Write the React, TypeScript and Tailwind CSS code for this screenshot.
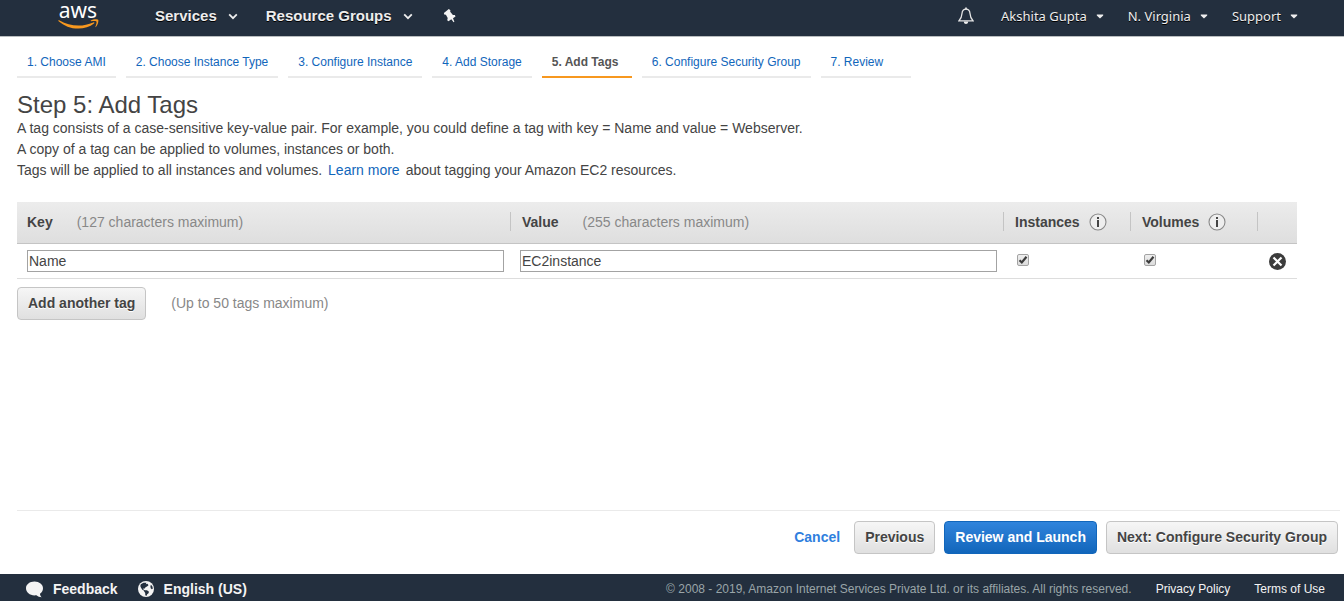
import { useState } from 'react';
import type { ReactNode } from 'react';

const steps = [
  '1. Choose AMI',
  '2. Choose Instance Type',
  '3. Configure Instance',
  '4. Add Storage',
  '5. Add Tags',
  '6. Configure Security Group',
  '7. Review',
];

function Caret({ small = false }: { small?: boolean }) {
  return small ? (
    <svg viewBox="0 0 8 5" className="h-[5px] w-2" aria-hidden="true">
      <path d="M0.8 0.5h6.400v1L4 4.400 0.800 1.500z" fill="#eee" />
    </svg>
  ) : (
    <svg viewBox="0 0 10 7" className="h-[7px] w-[10px]" aria-hidden="true">
      <path d="M1.200 1.400 5 5.200 8.800 1.400" fill="none" stroke="#eee" strokeWidth="1.800" />
    </svg>
  );
}

function AwsLogo() {
  return (
    <a href="#home" aria-label="AWS home" className="flex w-[42px] flex-col items-center pb-[6px]">
      <svg viewBox="0 0 42 28" className="h-7 w-[42px]" aria-hidden="true">
        <text x="21" y="17" textAnchor="middle" fontFamily="'Noto Sans', 'Open Sans', sans-serif" fontSize="21" fontWeight="400" fill="#fff">
          aws
        </text>
        <g transform="translate(0 18)">
          <path d="M1.300 1.600C1.500 1.100 2 1.100 2.600 1.400 8.500 4.800 14.500 6.500 21.500 6.500 26.500 6.500 31.500 5.500 36.300 3.400 37.200 3 37.900 3.900 37 4.500 33 7.700 27 9.600 21.500 9.600 13.500 9.600 7 6.700 1.600 2.200 1.300 2 1.200 1.800 1.300 1.600z" fill="#f7981f" />
          <path d="M33.800 1.600C36 0 40.500 0 41.200 0.800 41.800 1.600 41 6 38.900 8 38.500 8.300 38.200 8.100 38.400 7.700 39.100 6 40 3.200 39.400 2.500 38.800 1.800 35.700 2 34.200 2.200 33.600 2.200 33.500 1.900 33.800 1.600z" fill="#f7981f" />
        </g>
      </svg>
    </a>
  );
}

function PinIcon() {
  return (
    <svg viewBox="0 0 14 16" className="h-4 w-[14px]" aria-hidden="true">
      <path d="M5.800 1 7.400 2.200 7.200 3.800 9.900 7 11.900 7 12.500 8.500 10 10.200 11.400 13.700 10.600 14.300 8.300 11.300 5.500 13.300 4.200 12.300 4.700 10 2.900 6.700 1.200 6.500 0.900 4.900z" fill="#f4f4f4" />
    </svg>
  );
}

function BellIcon() {
  return (
    <svg viewBox="0 0 16 18" className="h-[18px] w-4" aria-hidden="true">
      <path d="M8 2.200C5.300 2.200 4.200 4.200 4 6.500 3.800 9.500 3.300 11.500 1 13.800H15C12.700 11.500 12.200 9.500 12 6.500 11.800 4.200 10.700 2.200 8 2.200z" fill="none" stroke="#e6e6e6" strokeWidth="1.300" />
      <path d="M7.200 0.500h1.600v2H7.200zM5.800 14.500h4.400C10 16.300 9.200 17 8 17S6 16.300 5.800 14.500z" fill="#eee" />
    </svg>
  );
}

function InfoButton({ label }: { label: string }) {
  return (
    <button type="button" aria-label={label} className="flex">
      <svg viewBox="0 0 18 18" className="h-[18px] w-[18px]" aria-hidden="true">
        <circle cx="9" cy="9" r="8" fill="#eee" stroke="#888" strokeWidth="1.100" />
        <path d="M8 4h2v2H8zM8 7h2V14H8z" fill="#444" />
      </svg>
    </button>
  );
}

function Tick({ label }: { label: string }) {
  const [on, setOn] = useState(true);
  return (
    <label className="grid h-[13px] w-[13px] place-items-center">
      <input
        type="checkbox"
        aria-label={label}
        checked={on}
        onChange={(e) => setOn(e.target.checked)}
        className="col-start-1 row-start-1 h-3 w-3 appearance-none rounded-xs border border-[#a3a3a3] bg-linear-to-b from-[#eee] to-[#dcdcdc]"
      />
      {on && (
        <svg viewBox="0 0 12 12" className="pointer-events-none col-start-1 row-start-1 h-3 w-3" aria-hidden="true">
          <path d="M2.500 6.300 4.800 8.500 9.500 2.800" fill="none" stroke="#3c3c3c" strokeWidth="2.200" />
        </svg>
      )}
    </label>
  );
}

function NavButton({ children, small }: { children: ReactNode; small?: boolean }) {
  return small ? (
    <button type="button" className="flex items-center gap-[9px] font-['Noto_Sans',sans-serif] text-[13px] leading-5 text-[#eee] [text-shadow:0_1px_0_#000]">
      {children}
      <Caret small />
    </button>
  ) : (
    <button type="button" className="flex items-center gap-[11px] text-[15px] leading-5 font-bold text-[#eee] [text-shadow:0_1px_0_#000]">
      {children}
      <Caret />
    </button>
  );
}

function Button({ children, primary }: { children: ReactNode; primary?: boolean }) {
  return (
    <button
      type="button"
      className={
        primary
          ? 'h-[33px] rounded-[4px] border border-[#1166bb] bg-linear-to-b from-[#2f84dc] to-[#1166bb] px-[10px] pb-[2px] text-sm font-bold whitespace-nowrap text-white'
          : 'h-[33px] rounded-[4px] border border-[#c5c5c5] bg-linear-to-b from-[#f6f6f6] to-[#e0e0e0] px-[10px] pb-[2px] text-sm font-bold whitespace-nowrap text-[#444] [text-shadow:0_1px_0_#fff]'
      }
    >
      {children}
    </button>
  );
}

function HeadCell({ children, first, className = '' }: { children?: ReactNode; first?: boolean; className?: string }) {
  return (
    <th scope="col" className={`h-[42px] border-b border-[#c4c4c4] px-0 pt-0 pb-[2px] text-left font-bold ${className}`}>
      <div className={`flex h-[19px] items-center ${first ? 'pl-[10px]' : 'border-l border-[#c4c4c4] pl-[11px]'}`}>{children}</div>
    </th>
  );
}

const field = 'h-[22px] w-full border border-[#a3a3a3] bg-white px-px text-sm text-[#444] outline-none';

export default function App() {
  return (
    <div className="flex min-h-screen flex-col bg-white font-['Liberation_Sans',Arial,sans-serif] text-sm text-[#444]">
      <header className="flex h-[37px] items-center justify-between border-b border-[#b9bdbf] bg-[#232f3e] pr-[46px] pl-[57px]">
        <div className="flex items-center">
          <AwsLogo />
          <nav className="ml-14 flex items-center gap-7 pb-1">
            <NavButton>Services</NavButton>
            <NavButton>Resource Groups</NavButton>
            <button type="button" aria-label="Pin shortcuts" className="ml-[2px]">
              <PinIcon />
            </button>
          </nav>
        </div>
        <nav className="flex items-center gap-6 pb-1">
          <button type="button" aria-label="Notifications" className="mr-[3px]">
            <BellIcon />
          </button>
          <NavButton small>Akshita Gupta</NavButton>
          <NavButton small>N. Virginia</NavButton>
          <NavButton small>Support</NavButton>
        </nav>
      </header>

      <main className="flex grow flex-col pl-[17px]">
        <nav className="mt-[14px] flex gap-[10px] text-xs">
          {steps.map((s, i) => (
            <a
              key={s}
              href="#step"
              className={
                i === 4
                  ? 'min-w-[90px] border-b-2 border-[#f7981f] px-[10px] pt-[3px] pb-[6px] font-bold text-[#555]'
                  : 'min-w-[90px] border-b-2 border-[#eaeaea] px-[10px] pt-[3px] pb-[6px] text-[#1166bb]'
              }
            >
              {s}
            </a>
          ))}
        </nav>

        <h1 className="mt-[14px] text-2xl leading-[26px]">Step 5: Add Tags</h1>
        <div className="leading-[21px]">
          <p>A tag consists of a case-sensitive key-value pair. For example, you could define a tag with key = Name and value = Webserver.</p>
          <p>A copy of a tag can be applied to volumes, instances or both.</p>
          <p>
            Tags will be applied to all instances and volumes.
            <a href="#learn" className="mx-[6px] text-[#1166bb]">Learn more</a>
            about tagging your Amazon EC2 resources.
          </p>
        </div>

        <div className="mt-[21px] mr-[47px]">
          <table className="w-full table-fixed border-separate border-spacing-0">
            <thead className="bg-linear-to-b from-[#ececec] to-[#dedede]">
              <tr>
                <HeadCell first>
                  Key<span className="ml-6 font-normal text-[#888]">(127 characters maximum)</span>
                </HeadCell>
                <HeadCell>
                  Value<span className="ml-6 font-normal text-[#888]">(255 characters maximum)</span>
                </HeadCell>
                <HeadCell className="w-[127px]">
                  <span className="mr-[9px]">Instances</span>
                  <InfoButton label="About instances" />
                </HeadCell>
                <HeadCell className="w-[127px]">
                  <span className="mr-[9px]">Volumes</span>
                  <InfoButton label="About volumes" />
                </HeadCell>
                <HeadCell className="w-10" />
              </tr>
            </thead>
            <tbody>
              <tr>
                <td className="h-[35px] border-b border-[#ddd] py-0 pr-[6px] pl-[10px]">
                  <input aria-label="Key" defaultValue="Name" className={field} />
                </td>
                <td className="border-b border-[#ddd] py-0 pr-[6px] pl-[10px]">
                  <input aria-label="Value" defaultValue="EC2instance" className={field} />
                </td>
                <td className="border-b border-[#ddd] pt-0 pb-[2px] pl-[13px]">
                  <Tick label="Instances" />
                </td>
                <td className="border-b border-[#ddd] pt-0 pb-[2px] pl-[13px]">
                  <Tick label="Volumes" />
                </td>
                <td className="border-b border-[#ddd] py-0 pl-3">
                  <button type="button" aria-label="Remove tag" className="flex">
                    <svg viewBox="0 0 17 17" className="h-[17px] w-[17px]" aria-hidden="true">
                      <circle cx="8.500" cy="8.500" r="8.500" fill="#3c3c3c" />
                      <path d="M4.500 4.500l8 8M12.500 4.500l-8 8" stroke="#fff" strokeWidth="2.200" />
                    </svg>
                  </button>
                </td>
              </tr>
            </tbody>
          </table>
          <div className="mt-2 flex items-center gap-[25px]">
            <Button>Add another tag</Button>
            <span className="pb-[2px] text-[#888]">(Up to 50 tags maximum)</span>
          </div>
        </div>

        <div className="mt-auto mr-1 border-t border-[#eaeaea]" />
        <div className="flex items-center justify-end gap-[9px] pt-[10px] pr-[6px] pb-5">
          <a href="#cancel" className="mr-[5px] pb-[2px] font-bold text-[#2f7fde]">Cancel</a>
          <Button>Previous</Button>
          <Button primary>Review and Launch</Button>
          <Button>Next: Configure Security Group</Button>
        </div>
      </main>

      <footer className="flex h-[27px] items-center justify-between bg-[#232f3e] pt-[3px] pr-[19px] pl-[26px]">
        <div className="flex items-center gap-5 text-sm font-bold text-[#f4f4f4]">
          <a href="#feedback" className="flex items-center gap-[10px]">
            <svg viewBox="0 0 17 17" className="h-[17px] w-[17px]" aria-hidden="true">
              <path d="M8.500 0.500C13.300 0.500 17 3.500 17 7.200c0 2.300-1.300 4.300-3 5.500 0 1.500.7 2.800 1.800 3.600-2.300 0-4-.7-5.400-2-.6.1-1.200.1-1.900.1C3.700 14.400 0 11 0 7.200S3.700 0.500 8.500 0.500z" fill="#f4f4f4" />
            </svg>
            Feedback
          </a>
          <button type="button" className="flex items-center gap-[10px]">
            <svg viewBox="0 0 16 16" className="h-4 w-4" aria-hidden="true">
              <circle cx="8" cy="8" r="8" fill="#f4f4f4" />
              <path d="M2.800 3.200 5.500 1.800 8.500 1.800 7.800 3.200 9.500 2.800 10.500 4.200 9 5.500 7.500 6.300 6.800 7.600 5.200 7.500 5.600 8.700 7 9.200 9 9.300 11 10.700 10.500 12.200 9.200 13.200 8.400 14.900 7.300 14.200 7.200 12 6.200 10.500 5.800 9.500 4.300 8.700 3 6.800 2.300 5zM12.800 3.800 14.200 5 14.900 7.500 13.800 8.300 12.700 7.200 12.400 5.600z" fill="#232f3e" />
            </svg>
            English (US)
          </button>
        </div>
        <div className="flex items-center gap-6 text-xs text-[#f4f4f4]">
          <span className="text-[#9aa5a8]">© 2008 - 2019, Amazon Internet Services Private Ltd. or its affiliates. All rights reserved.</span>
          <a href="#privacy">Privacy Policy</a>
          <a href="#terms">Terms of Use</a>
        </div>
      </footer>
    </div>
  );
}
